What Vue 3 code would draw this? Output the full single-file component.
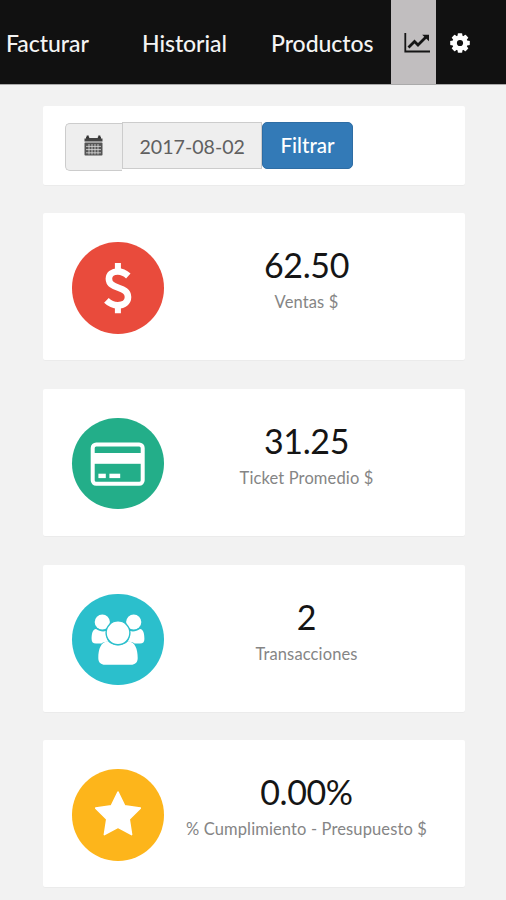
<template>
  <div class="page">
    <nav class="navbar">
      <a v-for="link in links" :key="link" class="nav-link">{{ link }}</a>
      <a class="nav-icon active">
        <svg width="27" height="22" viewBox="0 0 27 22">
          <path d="M1.3 1V19.5H26" fill="none" stroke="#151515" stroke-width="1.8" />
          <path d="M4.5 15.5L10.5 9.5L14 13L22.5 4.5" fill="none" stroke="#151515" stroke-width="2.8" />
          <path d="M18.2 2.8H25V9.3Z" fill="#151515" />
        </svg>
      </a>
      <a class="nav-icon">
        <svg width="20" height="20" viewBox="0 0 20 20">
          <g fill="#fff">
            <rect v-for="a in [0, 45, 90, 135]" :key="a" x="7.7" y="0.2" width="4.6" height="19.6" rx="0.8" :transform="`rotate(${a} 10 10)`" />
            <circle cx="10" cy="10" r="7.8" />
          </g>
          <circle cx="10" cy="10" r="3.1" fill="#111" />
        </svg>
      </a>
    </nav>

    <main class="content">
      <section class="card filter">
        <span class="addon">
          <svg width="19" height="21" viewBox="0 0 19 21">
            <path d="M0.5 3.5H2V1.8H5.2V3H13.8V1.8H17V3.5H18.5V6.4H0.5Z" fill="#444" />
            <path d="M2.7 0.5H4.7V3.5H2.7ZM14.3 0.5H16.3V3.5H14.3Z" fill="#333" />
            <rect x="0.5" y="7.6" width="18" height="12.9" rx="0.8" fill="#555" />
            <path d="M2 11.4H17M2 14.6H17M2 17.8H17M5 9V19.5M8 9V19.5M11 9V19.5M14 9V19.5" stroke="#ddd" stroke-width="0.8" />
          </svg>
        </span>
        <input class="date" type="text" v-model="date" readonly />
        <button class="btn">Filtrar</button>
      </section>

      <section v-for="stat in stats" :key="stat.icon" class="card stat">
        <div class="circle" :class="stat.icon">
          <svg width="92" height="92" viewBox="0 0 92 92">
            <g v-if="stat.icon === 'money'" fill="none" stroke="#fff">
              <path d="M56.3 34C53 31 49.5 29.5 45.8 29.5C40.3 29.5 36.9 32.4 36.9 36.7C36.9 48 56 43.5 56 55C56 60.2 51.9 63.2 45.8 63.2C41.3 63.2 37.7 61.5 34.4 58.3" stroke-width="6.6" />
              <path d="M45.9 21V30M45.9 62V71.3" stroke-width="6" />
            </g>
            <g v-else-if="stat.icon === 'ticket'" fill="#fff">
              <rect x="20.7" y="26.4" width="50" height="39.4" rx="3.5" fill="none" stroke="#fff" stroke-width="4" />
              <rect x="21" y="35" width="49" height="10.8" />
              <rect x="26.4" y="55.7" width="7.4" height="4.4" />
              <rect x="37.4" y="55.7" width="10.8" height="4.4" />
            </g>
            <g v-else-if="stat.icon === 'users'" fill="#fff">
              <circle cx="30.3" cy="28" r="7.6" />
              <circle cx="61.7" cy="28" r="7.6" />
              <path d="M24 35C28 38 33 38 36.5 36C34 40 34 44 36.5 48C33 47.5 31 48.5 29.5 49.5H24C21 49.5 19.6 48 19.6 45C19.6 40 20.5 35.5 24 35Z" />
              <path d="M68 35C64 38 59 38 55.5 36C58 40 58 44 55.5 48C59 47.5 61 48.5 62.5 49.5H68C71 49.5 72.4 48 72.4 45C72.4 40 71.5 35.5 68 35Z" />
              <path d="M36 47.5C42 52.5 50 52.5 56 47.5C63 47.5 65.7 55 65.7 64C65.7 68.5 63 70.8 59 70.8H33C29 70.8 26.3 68.5 26.3 64C26.3 55 29 47.5 36 47.5Z" />
              <circle cx="46" cy="38.8" r="11.9" stroke="#2bbfcc" stroke-width="1.4" />
            </g>
            <path v-else d="M46 23L52.7 36.8L68.3 39.1L57.2 50.1L59.6 65.6L46 58.4L32.4 65.6L34.8 50.1L23.7 39.1L39.3 36.8Z" fill="#fff" stroke="#fff" stroke-width="1.6" stroke-linejoin="round" />
          </svg>
        </div>
        <div class="info">
          <div class="value">{{ stat.value }}</div>
          <div class="label">{{ stat.label }}</div>
        </div>
      </section>
    </main>
  </div>
</template>

<script setup>
import { ref } from 'vue';

const links = ['Facturar', 'Historial', 'Productos'];
const date = ref('2017-08-02');

const stats = [
  { icon: 'money', value: '62.50', label: 'Ventas $' },
  { icon: 'ticket', value: '31.25', label: 'Ticket Promedio $' },
  { icon: 'users', value: '2', label: 'Transacciones' },
  { icon: 'goal', value: '0.00%', label: '% Cumplimiento - Presupuesto $' }
];
</script>

<style>
body {
  margin: 0;
  background: #f2f2f2;
}
</style>

<style scoped>
.page {
  height: 900px;
  overflow: hidden;
  background: #f2f2f2;
  font-family: Lato, "Liberation Sans", sans-serif;
}
.navbar {
  display: grid;
  grid-template-columns: 136px 129px 120px 45px 48px;
  grid-template-rows: 84px;
  box-sizing: border-box;
  height: 85px;
  padding-left: 6px;
  background: #111;
  border-bottom: 1px solid #aaa;
}
.nav-link {
  color: #f4f4f4;
  font-size: 23px;
  font-weight: 500;
  line-height: 86px;
  letter-spacing: -0.05px;
  white-space: nowrap;
}
.nav-icon {
  display: flex;
  align-items: center;
  justify-content: center;
  padding-top: 2px;
}
.nav-icon.active {
  background: #c1bebf;
  padding-left: 7px;
}
.content {
  padding: 21px 41.5px 0 43px;
}
.card {
  display: flex;
  box-sizing: border-box;
  margin-bottom: 28.7px;
  background: #fff;
  border-radius: 2px;
  box-shadow: 0 1px 1px rgba(0, 0, 0, 0.03);
}
.filter {
  height: 78.5px;
  padding: 16px 22px;
  align-items: flex-start;
}
.addon {
  display: flex;
  align-items: center;
  justify-content: center;
  box-sizing: border-box;
  width: 57px;
  height: 48px;
  margin-top: 1px;
  padding: 0 2px 3px 0;
  background: #eee;
  border: 1px solid #ccc;
  border-right: none;
  border-radius: 5px 0 0 5px;
}
.date {
  box-sizing: border-box;
  width: 140px;
  height: 47px;
  padding: 1px 0 0 16.5px;
  background: #eee;
  border: 1px solid #ccc;
  color: #606060;
  font-family: inherit;
  font-size: 19.6px;
  outline: none;
}
.btn {
  width: 91px;
  height: 47px;
  padding: 0 0 1px;
  background: #337ab7;
  border: 1px solid #2e6da4;
  border-radius: 5px;
  color: #fff;
  font-family: inherit;
  font-size: 20.5px;
  font-weight: 500;
}
.stat {
  height: 147px;
  padding: 29px 29px 0;
}
.circle {
  width: 91.5px;
  height: 91.5px;
  flex: none;
  border-radius: 50%;
}
.money {
  background: #e94b3c;
}
.ticket {
  background: #23ae89;
}
.users {
  background: #2bbfcc;
}
.goal {
  background: #fdb51b;
}
.info {
  flex: 1;
  margin: 2px -14px 0 0;
  text-align: center;
  white-space: nowrap;
}
.value {
  color: #151515;
  font-size: 34px;
  line-height: 42px;
  letter-spacing: -0.4px;
}
.label {
  margin-top: 6px;
  color: #858585;
  font-size: 16.5px;
  line-height: 21px;
  letter-spacing: 0.13px;
}
</style>
